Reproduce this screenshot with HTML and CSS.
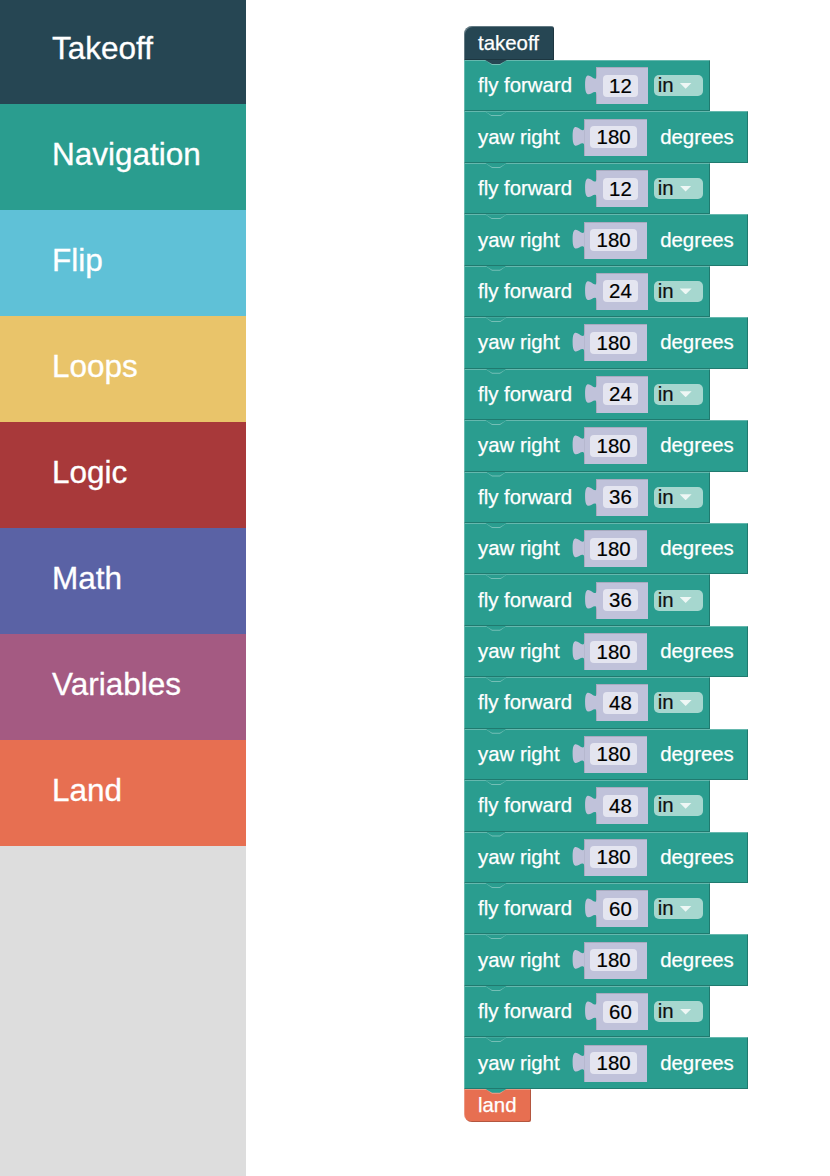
FILE: index.html
```html
<!DOCTYPE html>
<html lang="en">
<head>
    <meta charset="UTF-8">
    <meta name="viewport" content="width=device-width, initial-scale=1.0">
    <title>Drone Blocks</title>
    <link rel="stylesheet" href="styles.css">
</head>
<body>
    <div class="sidebar">
        <ul class="categories">
            <li class="cat takeoff">Takeoff</li>
            <li class="cat navigation">Navigation</li>
            <li class="cat flip">Flip</li>
            <li class="cat loops">Loops</li>
            <li class="cat logic">Logic</li>
            <li class="cat math">Math</li>
            <li class="cat variables">Variables</li>
            <li class="cat land">Land</li>
        </ul>
    </div>

    <div class="workspace">
        <div class="stack">
            <div class="block hat">takeoff</div>

            <div class="block stmt fly"><span class="label">fly forward</span><span class="socket"><span class="field">12</span></span><span class="dropdown">in<span class="arrow"></span></span></div>
            <div class="block stmt yaw"><span class="label">yaw right</span><span class="socket"><span class="field">180</span></span><span class="unit">degrees</span></div>
            <div class="block stmt fly"><span class="label">fly forward</span><span class="socket"><span class="field">12</span></span><span class="dropdown">in<span class="arrow"></span></span></div>
            <div class="block stmt yaw"><span class="label">yaw right</span><span class="socket"><span class="field">180</span></span><span class="unit">degrees</span></div>
            <div class="block stmt fly"><span class="label">fly forward</span><span class="socket"><span class="field">24</span></span><span class="dropdown">in<span class="arrow"></span></span></div>
            <div class="block stmt yaw"><span class="label">yaw right</span><span class="socket"><span class="field">180</span></span><span class="unit">degrees</span></div>
            <div class="block stmt fly"><span class="label">fly forward</span><span class="socket"><span class="field">24</span></span><span class="dropdown">in<span class="arrow"></span></span></div>
            <div class="block stmt yaw"><span class="label">yaw right</span><span class="socket"><span class="field">180</span></span><span class="unit">degrees</span></div>
            <div class="block stmt fly"><span class="label">fly forward</span><span class="socket"><span class="field">36</span></span><span class="dropdown">in<span class="arrow"></span></span></div>
            <div class="block stmt yaw"><span class="label">yaw right</span><span class="socket"><span class="field">180</span></span><span class="unit">degrees</span></div>
            <div class="block stmt fly"><span class="label">fly forward</span><span class="socket"><span class="field">36</span></span><span class="dropdown">in<span class="arrow"></span></span></div>
            <div class="block stmt yaw"><span class="label">yaw right</span><span class="socket"><span class="field">180</span></span><span class="unit">degrees</span></div>
            <div class="block stmt fly"><span class="label">fly forward</span><span class="socket"><span class="field">48</span></span><span class="dropdown">in<span class="arrow"></span></span></div>
            <div class="block stmt yaw"><span class="label">yaw right</span><span class="socket"><span class="field">180</span></span><span class="unit">degrees</span></div>
            <div class="block stmt fly"><span class="label">fly forward</span><span class="socket"><span class="field">48</span></span><span class="dropdown">in<span class="arrow"></span></span></div>
            <div class="block stmt yaw"><span class="label">yaw right</span><span class="socket"><span class="field">180</span></span><span class="unit">degrees</span></div>
            <div class="block stmt fly"><span class="label">fly forward</span><span class="socket"><span class="field">60</span></span><span class="dropdown">in<span class="arrow"></span></span></div>
            <div class="block stmt yaw"><span class="label">yaw right</span><span class="socket"><span class="field">180</span></span><span class="unit">degrees</span></div>
            <div class="block stmt fly"><span class="label">fly forward</span><span class="socket"><span class="field">60</span></span><span class="dropdown">in<span class="arrow"></span></span></div>
            <div class="block stmt yaw"><span class="label">yaw right</span><span class="socket"><span class="field">180</span></span><span class="unit">degrees</span></div>

            <div class="block cap">land</div>
        </div>
    </div>
</body>
</html>
```

FILE: styles.css
```css
* {
    box-sizing: border-box;
}

body {
    margin: 0;
    display: flex;
    height: 100vh;
    overflow: hidden;
    font-family: "Liberation Sans", Arial, sans-serif;
    background: #fff;
}

/* category menu */

.sidebar {
    width: 246px;
    flex-shrink: 0;
    background: #ddd;
}

.categories {
    list-style: none;
    margin: -2px 0 0;
    padding: 0;
}

.cat {
    height: 106px;
    padding: 32px 0 0 52px;
    font-size: 31.5px;
    line-height: 36px;
    color: #fff;
    -webkit-text-stroke: 0.3px #fff;
}

.takeoff { background: #264653; }
.navigation { background: #2a9d8f; }
.flip { background: #5fc1d7; }
.loops { background: #e9c46a; }
.logic { background: #a8393a; }
.math { background: #5a62a5; }
.variables { background: #a45a82; }
.land { background: #e76f51; }

/* workspace */

.workspace {
    flex: 1;
    padding: 26px 0 0 218px;
}

.stack {
    display: flex;
    flex-direction: column;
    align-items: flex-start;
}

.block {
    position: relative;
    display: flex;
    align-items: center;
    padding-left: 14px;
    color: #fff;
    font-size: 20.4px;
    white-space: nowrap;
    -webkit-text-stroke: 0.25px #fff;
    box-shadow: inset 1px 1px 0 rgba(255, 255, 255, 0.28), inset -1px -1px 0 rgba(0, 0, 0, 0.22);
}

/* tab hanging under a block */
.block:not(.cap)::after {
    content: '';
    position: absolute;
    left: 21px;
    bottom: -4px;
    width: 22px;
    height: 4px;
    background: inherit;
    clip-path: polygon(0 0, 100% 0, 68% 100%, 32% 100%);
    z-index: 2;
}

/* light edge of the notch on top of a block */
.block:not(.hat)::before {
    content: '';
    position: absolute;
    left: 21px;
    top: 0;
    width: 22px;
    height: 5px;
    background: rgba(255, 255, 255, 0.35);
    clip-path: polygon(0 0, 100% 0, 68% 100%, 32% 100%);
    z-index: 1;
}

.hat {
    width: 90px;
    height: 34px;
    background: #264653;
    border-radius: 8px 3px 0 0;
}

.cap {
    width: 67px;
    height: 33px;
    background: #e76f51;
    border-radius: 0 0 2px 8px;
}

.stmt {
    height: 51.45px;
    background: #2a9d8f;
}

.fly { width: 246px; }
.yaw { width: 284px; }

.socket {
    position: relative;
    display: flex;
    align-items: center;
    height: 37px;
    margin-left: 24px;
    padding: 0 9.5px 0 6.5px;
    background: #c0c2da;
    box-shadow: inset 1px 1px 0 rgba(0, 0, 0, 0.12);
}

.socket::before {
    content: '';
    position: absolute;
    left: -12px;
    top: 7px;
    width: 13px;
    height: 24px;
    background: inherit;
    clip-path: path('M13 0 C13 14 1 -11 1 10.5 C1 32 13 8 13 23 Z');
}

.field {
    height: 22px;
    padding: 0 6.5px;
    line-height: 22px;
    border-radius: 4px;
    background: #e4e5f0;
    color: #000;
    -webkit-text-stroke: 0.2px #000;
}

.dropdown {
    display: flex;
    align-items: center;
    height: 21px;
    margin-left: 6px;
    padding: 0 11px 0 4px;
    border-radius: 5px;
    background: #a6d7cf;
    color: #111;
    line-height: 21px;
    -webkit-text-stroke: 0.2px #111;
}

.arrow {
    width: 12px;
    height: 6px;
    margin-left: 6px;
    background: #eef7f5;
    clip-path: polygon(0 0, 100% 0, 50% 100%);
}

.unit {
    margin-left: 13.5px;
}
```
